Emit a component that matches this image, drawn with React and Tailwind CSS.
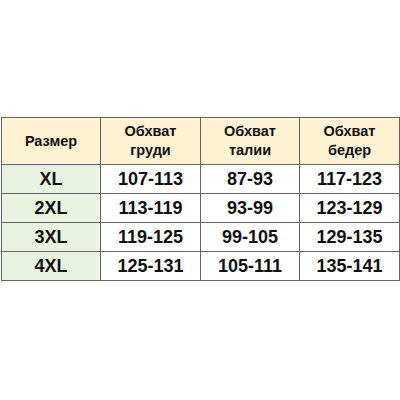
export default function App() {
  const rows = [
    ["XL", "107-113", "87-93", "117-123"],
    ["2XL", "113-119", "93-99", "123-129"],
    ["3XL", "119-125", "99-105", "129-135"],
    ["4XL", "125-131", "105-111", "135-141"],
  ];
  const cell = "border border-[#666666] text-center align-middle p-0";
  return (
    <div className="w-[400px] h-[400px] bg-white pt-[117px] pl-px" style={{ fontFamily: '"Liberation Sans", Arial, sans-serif' }}>
      <table className="border-collapse w-[398px] table-fixed text-[#111111] font-bold">
        <colgroup>
          <col className="w-[99px]" />
          <col className="w-[100px]" />
          <col className="w-[99px]" />
          <col className="w-[100px]" />
        </colgroup>
        <thead>
          <tr className="h-[47px] bg-[#fdf2d2] text-[14.5px] leading-[19px]">
            <th className={cell}>Размер</th>
            <th className={cell}>Обхват<br />груди</th>
            <th className={cell}>Обхват<br />талии</th>
            <th className={cell}>Обхват<br />бедер</th>
          </tr>
        </thead>
        <tbody>
          {rows.map((r) => (
            <tr key={r[0]} className="h-[29px] text-[18px] leading-[20px]">
              <td className={cell + " bg-[#e9f3df]"}>{r[0]}</td>
              <td className={cell}>{r[1]}</td>
              <td className={cell}>{r[2]}</td>
              <td className={cell}>{r[3]}</td>
            </tr>
          ))}
        </tbody>
      </table>
    </div>
  );
}
